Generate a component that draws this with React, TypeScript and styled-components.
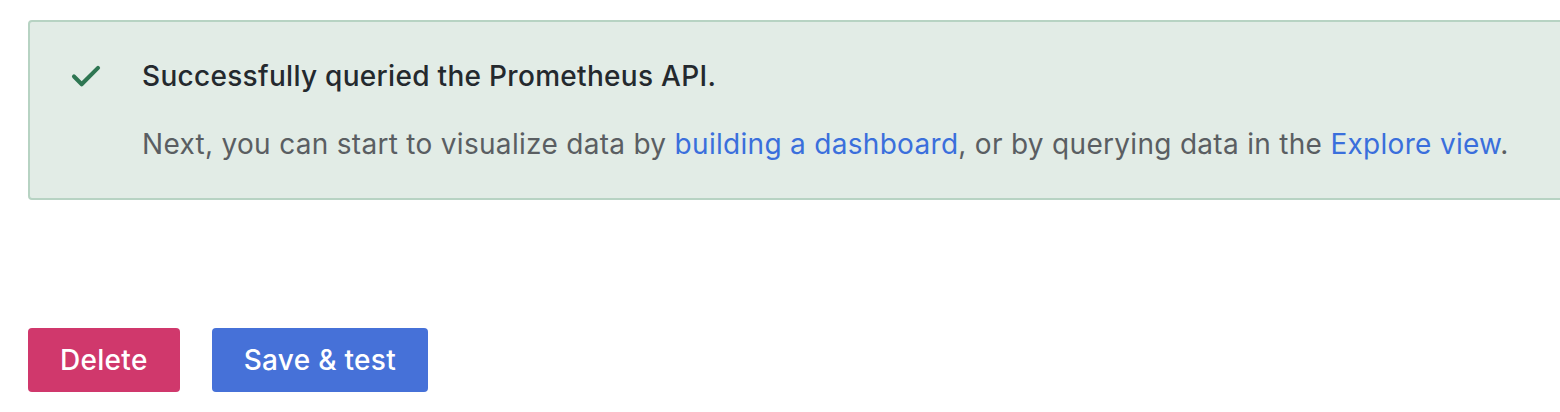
import React from "react";
import styled, { createGlobalStyle } from "styled-components";

const GlobalStyle = createGlobalStyle`
  html, body {
    margin: 0;
    padding: 0;
    background: #ffffff;
    overflow: hidden;
  }
  body {
    font-family: Inter, "Noto Sans", sans-serif;
  }
`;

const Page = styled.div`
  width: 1570px;
  padding: 20px 0 0 28px;
  display: flex;
  flex-direction: column;
  gap: 128px;
`;

const Alert = styled.div`
  display: flex;
  align-items: flex-start;
  gap: 32px;
  background: #e2ece6;
  border: 2px solid #b7d3c3;
  border-radius: 4px;
  padding: 30px 32px 33px 32px;
`;

const IconBox = styled.div`
  width: 48px;
  height: 48px;
  flex: none;
  display: flex;
  color: #2e7652;
`;

const Content = styled.div`
  display: flex;
  flex-direction: column;
`;

const Title = styled.div`
  font-size: 28px;
  line-height: 48px;
  font-weight: 500;
  letter-spacing: 0.3px;
  color: #24292e;
`;

const Body = styled.div`
  margin-top: 23px;
  font-size: 28px;
  line-height: 42px;
  font-weight: 400;
  letter-spacing: 0.3px;
  color: #5a5e62;
`;

const Link = styled.a`
  color: #3a6fdc;
  text-decoration: none;
`;

const Actions = styled.div`
  display: flex;
  gap: 32px;
`;

const Button = styled.button<{ $variant: "destructive" | "primary" }>`
  height: 64px;
  padding: 0 32px;
  border: none;
  border-radius: 4px;
  font-family: Inter, "Noto Sans", sans-serif;
  font-size: 28px;
  font-weight: 500;
  letter-spacing: 0.3px;
  color: #ffffff;
  background: ${(p) => (p.$variant === "destructive" ? "#d0386c" : "#4671d8")};
  cursor: pointer;
`;

const CheckIcon = () => (
  <svg width="48" height="48" viewBox="0 0 24 24" fill="currentColor">
    <path d="M18.71,7.21a1,1,0,0,0-1.42,0L9.84,14.67,6.71,11.53A1,1,0,1,0,5.29,13l3.84,3.84a1,1,0,0,0,1.42,0l8.16-8.16A1,1,0,0,0,18.71,7.21Z" />
  </svg>
);

export default function App() {
  return (
    <>
      <GlobalStyle />
      <Page>
        <Alert>
          <IconBox>
            <CheckIcon />
          </IconBox>
          <Content>
            <Title>Successfully queried the Prometheus API.</Title>
            <Body>
              Next, you can start to visualize data by{" "}
              <Link href="#">building a dashboard</Link>, or by querying data in
              the <Link href="#">Explore view</Link>.
            </Body>
          </Content>
        </Alert>
        <Actions>
          <Button $variant="destructive">Delete</Button>
          <Button $variant="primary">Save &amp; test</Button>
        </Actions>
      </Page>
    </>
  );
}
